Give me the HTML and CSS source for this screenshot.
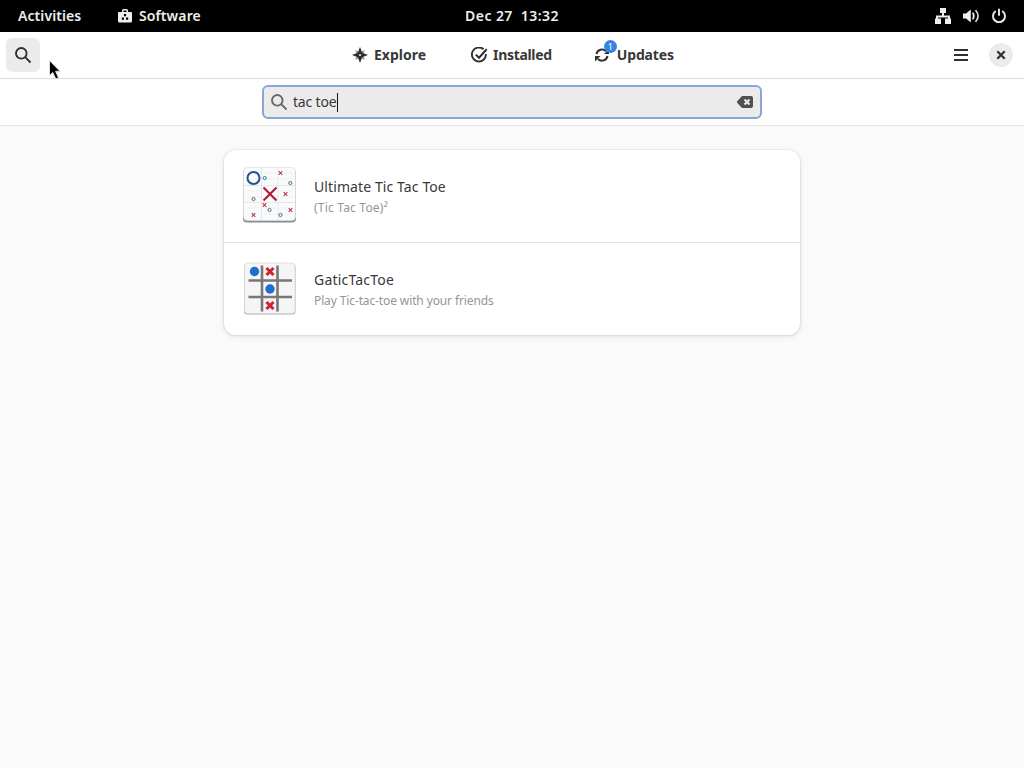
FILE: index.html
```html
<!DOCTYPE html>
<html lang="en">
<head>
<meta charset="utf-8">
<title>Software</title>
<link rel="stylesheet" href="styles.css">
</head>
<body>
<div class="topbar">
  <div class="topbar-left">
    <span class="activities">Activities</span>
    <svg class="app-icon" width="16" height="16" viewBox="0 0 16 16"><path d="M5 4V2.500Q5 1 6.500 1H9.500Q11 1 11 2.500V4H14Q15 4 15 5V13Q15 14.500 13.500 14.500H2.500Q1 14.500 1 13V5Q1 4 2 4ZM6.500 4H9.500V2.500H6.500Z" fill="#eee" fill-rule="evenodd"/><path d="M6.900 6h2.200v2.200H6.900zM4.800 9.500h2.200V11.700H4.800zM9 9.500h2.200V11.700H9z" fill="#000"/></svg>
    <span class="app-name">Software</span>
  </div>
  <span class="clock">Dec 27&nbsp; 13:32</span>
  <div class="status">
    <svg width="18" height="16" viewBox="0 0 18 16" fill="#eee"><path d="M6 0h6v5h-2V7.500h6v3h1V16h-6v-5.500h3V9.500H4v1h3V16H1v-5.500h1v-3H8V5H6z"/></svg>
    <svg width="18" height="16" viewBox="0 0 18 16"><path d="M0 5.500h3L7.800 1.500v13L3 10.500H0z" fill="#eee"/><path d="M10 5.300Q11.700 8 10 10.700" fill="none" stroke="#eee" stroke-width="1.700" stroke-linecap="round"/><path d="M13 2.800Q17.100 8 13 13.200" fill="none" stroke="#ccc" stroke-width="1.800" stroke-linecap="round"/></svg>
    <svg width="16" height="16" viewBox="0 0 16 16" fill="none" stroke="#eee" stroke-width="1.900" stroke-linecap="round"><path d="M4.200 3.500a6 6 0 1 0 7.600 0M8 1.500V7"/></svg>
  </div>
</div>
<div class="header">
  <div class="header-start"><div class="search-button"><svg width="18" height="18" viewBox="0 0 18 18" fill="none" stroke="#303030" stroke-width="1.900"><circle cx="7.300" cy="7.300" r="5.300"/><path d="M11.200 11.200L16.500 16.500"/></svg></div></div>
  <div class="tabs">
    <div class="tab explore">
      <svg width="16" height="16" viewBox="0 0 16 16"><path d="M3 3l4 2-2 2zM13 3l-2 4-2-2zM3 13l2-4 2 2zM13 13l-4-2 2-2z" fill="#888"/><path d="M8 0L10.200 5.800L16 8L10.200 10.200L8 16L5.800 10.200L0 8L5.800 5.800Z" fill="#2e2e2e"/><circle cx="8" cy="8" r="1" fill="#fff"/></svg>
      <span>Explore</span>
    </div>
    <div class="tab installed">
      <svg width="18" height="16" viewBox="0 0 18 16" fill="none" stroke="#303030"><path d="M12.500 2.200A7 7 0 1 0 14.900 7" stroke-width="1.900"/><path d="M4.800 7.600L8 10.700L15.700 2.300" stroke-width="2"/></svg>
      <span>Installed</span>
    </div>
    <div class="tab updates">
      <svg width="16" height="16" viewBox="0 0 16 16"><path d="M2.500 7A5.600 5.600 0 0 1 12 4.200M13.500 9A5.600 5.600 0 0 1 4 12" fill="none" stroke="#303030" stroke-width="2"/><path d="M10 7h5V2zM1 9h5.500L1 14.500z" fill="#303030"/></svg>
      <i class="badge">1</i>
      <span>Updates</span>
    </div>
  </div>
  <div class="header-end">
    <svg width="14" height="12" viewBox="0 0 14 12" fill="#303030"><path d="M0 0h14v2H0zM0 5h14v2H0zM0 10h14v2H0z"/></svg>
    <div class="close"><svg width="10" height="10" viewBox="0 0 10 10" stroke="#303030" stroke-width="2.200"><path d="M1.300 1.300L8.700 8.700M8.700 1.300L1.300 8.700"/></svg></div>
  </div>
</div>
<div class="searchbar">
  <div class="entry">
    <svg width="18" height="18" viewBox="0 0 18 18" fill="none" stroke="#686868" stroke-width="1.900"><circle cx="7.300" cy="7.300" r="5.300"/><path d="M11.200 11.200L16.500 16.500"/></svg>
    <span class="query">tac toe</span><span class="caret"></span>
    <svg class="clear" width="16" height="12" viewBox="0 0 16 12"><path d="M5 0H14Q16 0 16 2V10Q16 12 14 12H5L.4 7Q-.4 6 .4 5Z" fill="#505050"/><path d="M7.500 3.500l5 5M12.500 3.500l-5 5" stroke="#eee" stroke-width="2"/></svg>
  </div>
</div>
<div class="content">
  <div class="results">
    <div class="result">
      <svg class="result-icon icon-ultimate" width="56" height="58" viewBox="0 0 56 58">
        <rect x="1" y="4" width="53" height="53.500" rx="4" fill="#888d91"/><rect x="1.500" y="2.500" width="52" height="53" rx="4" fill="#fafafa" stroke="#dfdfdf" stroke-width=".7"/>
        <path d="M19.500 3v52M36 3v52M2 20.500h51M2 37.500h51" stroke="#e0e8ea"/>
        <path d="M5 26h13M5 32h13M22 8h12M22 14h12M39 8h12M39 14h12M39 26h12M39 32h12M5 43h12M5 49h12M22 43h12M22 49h12M39 43h12M39 49h12" stroke="#edf0f1"/>
        <circle cx="11.500" cy="13" r="6" fill="none" stroke="#23508e" stroke-width="2"/>
        <path d="M21.500 22.500L34.500 35.500M34.500 22.500L21.500 35.500" stroke="#ac1b37" stroke-width="2.100"/>
        <g fill="none" stroke="#4e738c" stroke-width="1"><circle cx="22.700" cy="13" r="1.600" stroke="#238ba8"/><circle cx="48.300" cy="18" r="1.600"/><circle cx="11.500" cy="34" r="1.600"/><circle cx="27.500" cy="45" r="1.600"/><circle cx="38.500" cy="50" r="1.600"/></g>
        <path d="M36.700 6.200l3.600 3.600m0-3.600l-3.600 3.600M41.700 27.200l3.600 3.600m0-3.600l-3.600 3.600M20.700 38.200l3.600 3.600m0-3.600l-3.600 3.600M46.700 43.200l3.600 3.600m0-3.600l-3.600 3.600M9.700 48.200l3.600 3.600m0-3.600l-3.600 3.600" stroke="#bd3648" stroke-width="1.100"/>
      </svg>
      <div class="result-text"><div class="name name-first">Ultimate Tic Tac Toe</div><div class="summary summary-first">(Tic Tac Toe)²</div></div>
    </div>
    <div class="result">
      <svg class="result-icon" width="56" height="58" viewBox="0 0 56 58">
        <rect x="2" y="4" width="51.500" height="50.500" rx="3" fill="#b0b0b0"/><rect x="2.500" y="3" width="50.500" height="50.500" rx="3" fill="#f5f5f5" stroke="#d6d6d6" stroke-width=".7"/>
        <path d="M20 5.500v46M35.500 5.500v46M6.500 20.500h43.500M6.500 37h43.500" stroke="#777" stroke-width="2.600"/>
        <g fill="#1b70ce"><circle cx="12.500" cy="11.500" r="4.700"/><circle cx="28" cy="29" r="4.700"/></g>
        <path d="M25.500 9l5 5m0-5l-5 5M25.500 43l5 5m0-5l-5 5" stroke="#d0212c" stroke-width="3" stroke-linecap="square"/>
      </svg>
      <div class="result-text"><div class="name name-second">GaticTacToe</div><div class="summary summary-second">Play Tic-tac-toe with your friends</div></div>
    </div>
  </div>
</div>
<svg class="cursor" width="16" height="24" viewBox="0 0 16 24"><path d="M1.500 1.500V16.500L4.800 13.500L7.800 20L10.500 18.700L7.600 12.300H12Z" fill="#000" stroke="#ddd" stroke-width="1"/></svg>
</body>
</html>
```
FILE: styles.css
```css
* { box-sizing: border-box; }
body {
  margin: 0;
  height: 768px;
  display: flex;
  flex-direction: column;
  overflow: hidden;
  background: #fafafa;
  color: #383838;
  font: 14px/20px "Noto Sans", sans-serif;
}
svg { display: block; flex: none; }
span, .name, .summary { white-space: pre; }
.topbar {
  height: 32px;
  flex: none;
  display: grid;
  grid-template-columns: 1fr auto 1fr;
  align-items: center;
  background: #000;
  color: #eee;
  font-weight: 600;
}
.topbar-left { display: flex; align-items: center; padding-left: 18px; }
.activities { width: 99px; letter-spacing: .08px; }
.app-name { margin-left: 6px; letter-spacing: .1px; }
.clock { letter-spacing: .42px; }
.status { display: flex; justify-content: flex-end; align-items: center; gap: 10px; padding-right: 17px; }
.status svg:first-child { margin-right: 1px; }
.header {
  height: 47px;
  flex: none;
  display: grid;
  grid-template-columns: 1fr auto 1fr;
  align-items: center;
  background: #fff;
  border-bottom: 1px solid #dadada;
}
.header-start { padding-left: 6px; }
.search-button {
  width: 34px;
  height: 34px;
  display: grid;
  place-items: center;
  background: #ebebeb;
  border-radius: 6px;
}
.tabs { display: flex; font-weight: 700; gap: 44px; padding-left: 2px; }
.tab { display: flex; align-items: center; gap: 6px; position: relative; }
.explore { margin-right: 1px; }
.installed { gap: 4px; letter-spacing: -.33px; margin-right: -2px; }
.updates { gap: 7px; letter-spacing: -.12px; }
.badge {
  position: absolute;
  left: 10px;
  top: -5px;
  width: 13px;
  height: 13px;
  border-radius: 50%;
  background: #3584e4;
  color: #fff;
  font: 400 9px/13px "Noto Sans", sans-serif;
  text-align: center;
}
.header-end { display: flex; justify-content: flex-end; align-items: center; gap: 21px; padding-right: 11px; }
.close { width: 24px; height: 24px; border-radius: 50%; background: #ebebeb; display: grid; place-items: center; }
.searchbar {
  height: 47px;
  flex: none;
  display: flex;
  justify-content: center;
  align-items: center;
  background: #fff;
  border-bottom: 1px solid #e5e5e5;
}
.entry {
  width: 500px;
  height: 34px;
  display: flex;
  align-items: center;
  padding: 0 7px 0 6px;
  background: #ebebeb;
  border: 2px solid #85a9d7;
  border-radius: 6px;
}
.query { margin-left: 5px; letter-spacing: -.18px; }
.caret { width: 1px; height: 19px; margin-left: 1px; background: #111; }
.clear { margin-left: auto; }
.content { flex: 1; padding-top: 24px; }
.results {
  width: 576px;
  margin: 0 auto;
  background: #fff;
  border-radius: 12px;
  box-shadow: 0 0 0 1px rgba(0,0,0,.035), 0 1px 3px 1px rgba(0,0,0,.07), 0 2px 6px 2px rgba(0,0,0,.025);
}
.result { height: 92px; display: flex; align-items: center; padding-left: 18px; gap: 16px; }
.result + .result { height: 93px; border-top: 1px solid #e4e4e4; }
.icon-ultimate { margin-bottom: 4px; }
.result-text { padding-top: 2px; }
.name-first { letter-spacing: .1px; }
.name-second { letter-spacing: .2px; }
.summary { font-size: 12px; line-height: 18px; color: #959595; margin-top: 2px; }
.summary-first { letter-spacing: .2px; }
.summary-second { letter-spacing: -.12px; }
.cursor { position: absolute; left: 48px; top: 59px; }
```
